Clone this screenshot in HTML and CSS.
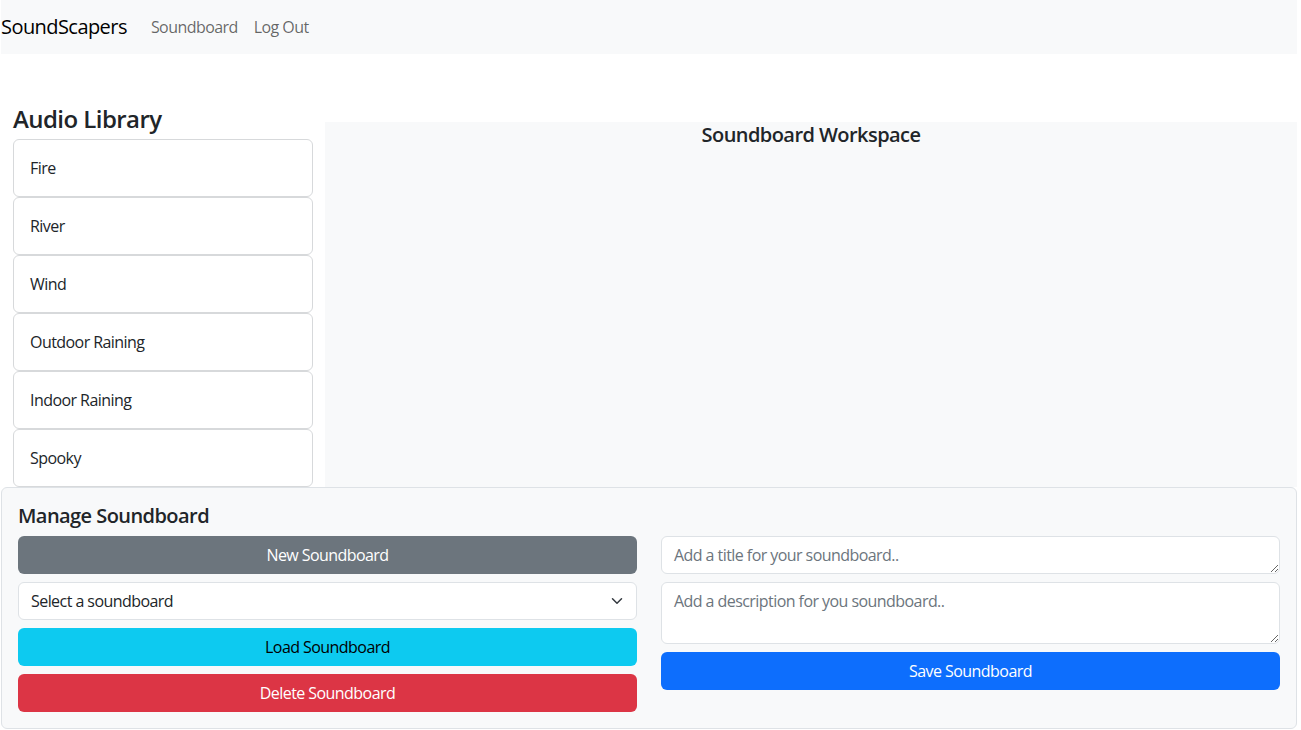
FILE: index.html
```html
<!DOCTYPE html>
<html lang="en">
<head>
<meta charset="utf-8">
<title>SoundScapers</title>
<link rel="stylesheet" href="styles.css">
</head>
<body>
<div class="page">
  <nav class="navbar">
    <a class="brand" href="#">SoundScapers</a>
    <a class="nav-link" href="#">Soundboard</a>
    <a class="nav-link" href="#">Log Out</a>
  </nav>

  <div class="main-row">
    <div class="library">
      <h4 class="library-title">Audio Library</h4>
      <ul class="sound-list">
        <li class="sound-item">Fire</li>
        <li class="sound-item">River</li>
        <li class="sound-item">Wind</li>
        <li class="sound-item">Outdoor Raining</li>
        <li class="sound-item">Indoor Raining</li>
        <li class="sound-item">Spooky</li>
      </ul>
    </div>
    <div class="workspace">
      <h5 class="workspace-title">Soundboard Workspace</h5>
    </div>
  </div>

  <section class="manage">
    <h5 class="manage-title">Manage Soundboard</h5>
    <div class="manage-grid">
      <div class="manage-col">
        <button class="btn btn-secondary">New Soundboard</button>
        <div class="select">
          <span>Select a soundboard</span>
          <svg class="chevron" width="16" height="12" viewBox="0 0 16 16"><path fill="none" stroke="#343a40" stroke-linecap="round" stroke-linejoin="round" stroke-width="2" d="m2 5 6 6 6-6"/></svg>
        </div>
        <button class="btn btn-info">Load Soundboard</button>
        <button class="btn btn-danger">Delete Soundboard</button>
      </div>
      <div class="manage-col">
        <textarea class="field field-title" placeholder="Add a title for your soundboard.."></textarea>
        <textarea class="field field-desc" placeholder="Add a description for you soundboard.."></textarea>
        <button class="btn btn-primary">Save Soundboard</button>
      </div>
    </div>
  </section>
</div>
</body>
</html>
```

FILE: styles.css
```css
* { box-sizing: border-box; }

body {
  margin: 0;
  font-family: "Open Sans", "Noto Sans", sans-serif;
  font-size: 16px;
  line-height: 1.5;
  letter-spacing: -0.035em;
  color: #212529;
  background: #fff;
}

.page {
  width: 1296px;
  margin-left: 1px;
}

.navbar {
  display: flex;
  align-items: center;
  height: 54px;
  background: #f8f9fa;
}

.brand {
  font-size: 20px;
  color: #000;
  text-decoration: none;
  margin-right: 16px;
}

.nav-link {
  color: rgba(0, 0, 0, 0.6);
  text-decoration: none;
  padding: 0 8px;
}

.main-row {
  display: flex;
  margin-top: 51px;
}

.library {
  width: 324px;
  padding: 0 12px;
  flex: none;
}

.library-title {
  margin: 0 0 6px;
  font-size: 24px;
  font-weight: 600;
  line-height: 28px;
}

.sound-list {
  list-style: none;
  margin: 0;
  padding: 0;
}

.sound-item {
  height: 58px;
  display: flex;
  align-items: center;
  padding: 0 16px;
  border: 1px solid #d7d9db;
  border-radius: 6px;
  background: #fff;
}

.workspace {
  flex: 1;
  margin-top: 17px;
  background: #f8f9fa;
  text-align: center;
}

.workspace-title {
  margin: 0;
  font-size: 20px;
  font-weight: 600;
  line-height: 26px;
}

.manage {
  background: #f8f9fa;
  border: 1px solid #dee2e6;
  border-radius: 6px;
  padding: 16px;
}

.manage-title {
  margin: 0 0 8px;
  font-size: 20px;
  font-weight: 600;
  line-height: 24px;
}

.manage-grid {
  display: grid;
  grid-template-columns: 1fr 1fr;
  column-gap: 24px;
}

.manage-col {
  display: flex;
  flex-direction: column;
  gap: 8px;
}

.btn {
  height: 38px;
  border: none;
  border-radius: 6px;
  font-family: inherit;
  font-size: 16px;
  letter-spacing: inherit;
  color: #fff;
  padding: 0 12px;
}

.btn-secondary { background: #6c757d; }
.btn-info { background: #0dcaf0; color: #000; }
.btn-danger { background: #dc3545; }
.btn-primary { background: #0d6efd; }

.select {
  height: 38px;
  display: flex;
  align-items: center;
  justify-content: space-between;
  padding: 0 11px 0 12px;
  background: #fff;
  border: 1px solid #dee2e6;
  border-radius: 6px;
}

.field {
  display: block;
  width: 100%;
  font-family: inherit;
  font-size: 16px;
  letter-spacing: inherit;
  line-height: 1.5;
  color: #212529;
  padding: 6px 12px;
  background: #fff;
  border: 1px solid #dee2e6;
  border-radius: 6px;
  resize: vertical;
}

.field::placeholder { color: #6c757d; }

.field-title { height: 38px; }
.field-desc { height: 62px; }
```
